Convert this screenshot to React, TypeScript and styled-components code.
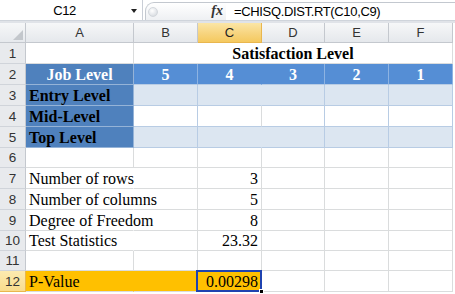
import React from 'react';
import styled, { createGlobalStyle } from 'styled-components';

const Global = createGlobalStyle`
  html, body { margin: 0; padding: 0; background: #fff; overflow: hidden; }
  * { box-sizing: border-box; }
`;

const GRID = '#dadcdd';
const BLUE_DARK = '#4f81bd';
const BLUE_MID = '#558ed5';
const BLUE_LIGHT = '#dce6f1';
const BLUE_LINE = '#b8cce4';
const ORANGE = '#ffc000';

const Sheet = styled.div`
  width: 455px;
  height: 294px;
  display: flex;
  flex-direction: column;
  background: #fff;
  overflow: hidden;
  font-family: "Liberation Sans", Arial, sans-serif;
`;

const FormulaBar = styled.div`
  height: 20px;
  display: flex;
  align-items: stretch;
  background: #fff;
`;

const NameBox = styled.div`
  width: 143px;
  display: flex;
  align-items: center;
  border-right: 1px solid #c9ced6;
  font-size: 13px;
  letter-spacing: -0.4px;
  color: #000;
`;

const NameText = styled.span`
  flex: 1;
  text-align: center;
  padding-right: 2px;
`;

const DropArrow = styled.span`
  width: 0;
  height: 0;
  margin-right: 5px;
  margin-top: 1px;
  border-left: 3.5px solid transparent;
  border-right: 3.5px solid transparent;
  border-top: 4px solid #222;
`;

const Capsule = styled.div`
  width: 81px;
  margin-left: 2px;
  margin-top: 2px;
  display: flex;
  align-items: center;
  justify-content: space-between;
  padding: 0 3px 0 2px;
  border: 1px solid #c3c8cf;
  border-right: none;
  border-bottom: none;
  border-radius: 9px 0 0 0;
  background: linear-gradient(#ffffff, #eef0f3);
`;

const Grip = styled.span`
  width: 10px;
  height: 10px;
  border-radius: 50%;
  background: radial-gradient(circle at 40% 35%, #ffffff 0%, #e2e5e9 60%, #cfd3d8 100%);
  border: 1px solid #d3d7dc;
`;

const Fx = styled.span`
  font-family: "Liberation Serif", "Times New Roman", serif;
  font-style: italic;
  font-weight: bold;
  font-size: 14px;
  color: #333;
  margin-bottom: 1px;
`;

const FormulaInput = styled.div`
  flex: 1;
  display: flex;
  align-items: center;
  padding-left: 8px;
  margin-top: 2px;
  border-top: 1px solid #c3c8cf;
  font-size: 13px;
  letter-spacing: -0.35px;
  color: #000;
`;

const Strip = styled.div`
  height: 3px;
  background: #e0e3e8;
  border-top: 1px solid #cfd4db;
`;

const Grid = styled.div`
  display: grid;
  width: 453px;
  grid-template-columns: 26px 108px 64px 64px 63px 64px 64px;
  grid-template-rows: 20px 21px 21px 21px 21px 21px 20px 21px 21px 21px 20px 20px 21px;
`;

const Corner = styled.div`
  background: linear-gradient(#f6f7f8, #e6e9ed);
  border-right: 1px solid #c4c8ce;
  border-bottom: 1px solid #c4c8ce;
  display: flex;
  align-items: flex-end;
  justify-content: flex-end;
  padding: 0 2px 2px 0;
`;

const ColHeader = styled.div<{ $selected?: boolean }>`
  display: flex;
  align-items: center;
  justify-content: center;
  font-size: 13px;
  color: ${p => (p.$selected ? '#222' : '#333')};
  background: ${p =>
    p.$selected
      ? 'linear-gradient(#fbe6a6, #f7d47e 55%, #f5c95f)'
      : 'linear-gradient(#f6f7f8, #e5e8ec)'};
  border-right: 1px solid ${p => (p.$selected ? '#e9b64e' : '#c4c8ce')};
  border-bottom: 1px solid ${p => (p.$selected ? '#e9b64e' : '#c4c8ce')};
`;

const RowHeader = styled.div<{ $selected?: boolean }>`
  display: flex;
  align-items: center;
  justify-content: center;
  font-size: 13.5px;
  color: #333;
  background: ${p => (p.$selected ? 'linear-gradient(#fceab0, #f9dc8c)' : '#e8eaed')};
  border-right: 1px solid ${p => (p.$selected ? '#e9b64e' : '#c4c8ce')};
  border-bottom: 1px solid ${p => (p.$selected ? '#e9b64e' : '#d0d4da')};
`;

type CellProps = {
  $bg?: string;
  $rb?: string;
  $bb?: string;
  $align?: 'left' | 'right' | 'center';
  $bold?: boolean;
  $color?: string;
  $span?: number;
  $spill?: boolean;
};

const Cell = styled.div<CellProps>`
  position: relative;
  display: flex;
  align-items: flex-end;
  justify-content: ${p =>
    p.$align === 'right' ? 'flex-end' : p.$align === 'center' ? 'center' : 'flex-start'};
  padding: 0 3px 0 3px;
  font-family: "Liberation Serif", "Times New Roman", serif;
  font-size: 16px;
  line-height: 18px;
  white-space: nowrap;
  overflow: visible;
  z-index: ${p => (p.$spill ? 1 : 'auto')};
  font-weight: ${p => (p.$bold ? 'bold' : 'normal')};
  color: ${p => p.$color || '#000'};
  background: ${p => p.$bg || '#fff'};
  border-right: 1px solid ${p => p.$rb || GRID};
  border-bottom: 1px solid ${p => p.$bb || GRID};
  ${p => (p.$span ? `grid-column: span ${p.$span};` : '')}
`;

const Selected = styled(Cell)`
  &::after {
    content: '';
    position: absolute;
    left: -2px;
    top: -1px;
    right: -1px;
    bottom: -1px;
    border: 2px solid #1f43b0;
    pointer-events: none;
  }
`;

const FillHandle = styled.span`
  position: absolute;
  right: -3px;
  bottom: -3px;
  width: 5px;
  height: 5px;
  background: #000;
  border: 1px solid #fff;
  z-index: 2;
`;

function LabelRow({ n, label, value }: { n: number; label?: string; value?: string }) {
  const spill = !!label;
  return (
    <>
      <RowHeader>{n}</RowHeader>
      <Cell $spill={spill} $rb={spill ? '#fff' : GRID}>{label}</Cell>
      <Cell />
      <Cell $align="right">{value}</Cell>
      <Cell />
      <Cell />
      <Cell />
    </>
  );
}

function TableRow({ n, label, bg }: { n: number; label: string; bg: string }) {
  return (
    <>
      <RowHeader>{n}</RowHeader>
      <Cell $bg={BLUE_DARK} $bold $rb="#95b3d7" $bb="#95b3d7">{label}</Cell>
      <Cell $bg={bg} $rb={BLUE_LINE} $bb={BLUE_LINE} />
      <Cell $bg={bg} $rb={bg === '#fff' ? GRID : bg} $bb={BLUE_LINE} />
      <Cell $bg={bg} $rb={BLUE_LINE} $bb={BLUE_LINE} />
      <Cell $bg={bg} $rb={BLUE_LINE} $bb={BLUE_LINE} />
      <Cell $bg={bg} $rb={BLUE_LINE} $bb={BLUE_LINE} />
    </>
  );
}

const levels = ['5', '4', '3', '2', '1'];

export default function App() {
  return (
    <>
      <Global />
      <Sheet>
        <FormulaBar>
          <NameBox>
            <NameText>C12</NameText>
            <DropArrow />
          </NameBox>
          <Capsule>
            <Grip />
            <Fx>fx</Fx>
          </Capsule>
          <FormulaInput>=CHISQ.DIST.RT(C10,C9)</FormulaInput>
        </FormulaBar>
        <Strip />
        <Grid>
          <Corner>
            <svg width="10" height="10" viewBox="0 0 10 10">
              <polygon points="10,0 10,10 0,10" fill="#c3c7cc" />
            </svg>
          </Corner>
          <ColHeader>A</ColHeader>
          <ColHeader>B</ColHeader>
          <ColHeader $selected>C</ColHeader>
          <ColHeader>D</ColHeader>
          <ColHeader>E</ColHeader>
          <ColHeader>F</ColHeader>

          <RowHeader>1</RowHeader>
          <Cell />
          <Cell $span={5} $align="center" $bold>Satisfaction Level</Cell>

          <RowHeader>2</RowHeader>
          <Cell $bg={BLUE_DARK} $color="#fff" $bold $align="center" $rb="#95b3d7" $bb="#95b3d7">Job Level</Cell>
          {levels.map(l => (
            <Cell
              key={l}
              $bg={BLUE_MID}
              $color="#fff"
              $bold
              $align="center"
              $rb={l === '4' ? BLUE_MID : '#8db3e2'}
              $bb={BLUE_LINE}
            >
              {l}
            </Cell>
          ))}

          <TableRow n={3} label="Entry Level" bg={BLUE_LIGHT} />
          <TableRow n={4} label="Mid-Level" bg="#fff" />
          <TableRow n={5} label="Top Level" bg={BLUE_LIGHT} />

          <LabelRow n={6} />
          <LabelRow n={7} label="Number of rows" value="3" />
          <LabelRow n={8} label="Number of columns" value="5" />
          <LabelRow n={9} label="Degree of Freedom" value="8" />
          <LabelRow n={10} label="Test Statistics" value="23.32" />
          <LabelRow n={11} />

          <RowHeader $selected>12</RowHeader>
          <Cell $bg={ORANGE} $rb={ORANGE}>P-Value</Cell>
          <Cell $bg={ORANGE} $rb={ORANGE} />
          <Selected $bg={ORANGE} $align="right">
            0.00298
            <FillHandle />
          </Selected>
          <Cell />
          <Cell />
          <Cell />
        </Grid>
      </Sheet>
    </>
  );
}
